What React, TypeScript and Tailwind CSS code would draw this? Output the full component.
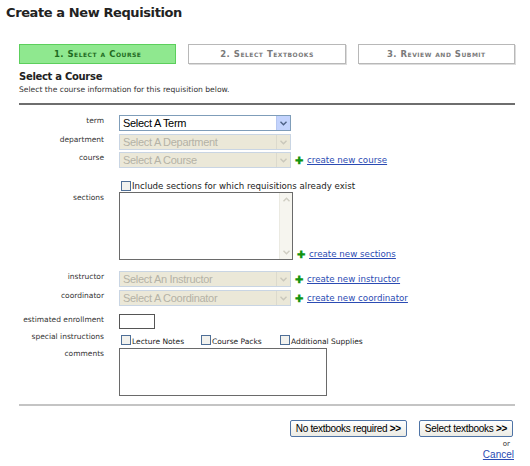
import { ReactNode } from 'react';

const labelFont = { fontFamily: '"DejaVu Sans", Verdana, sans-serif' };

function Chevron({ color = '#4d6185' }: { color?: string }) {
  return (
    <svg width="7" height="5" viewBox="0 0 7 5">
      <path d="M0.5 0.8 L3.5 3.8 L6.5 0.8" fill="none" stroke={color} strokeWidth="1.4" />
    </svg>
  );
}

function FakeSelect({ text, enabled }: { text: string; enabled?: boolean }) {
  return (
    <div
      className={`flex items-center w-[172px] h-[16px] border ${enabled ? 'border-[#7f9db9] bg-white text-black' : 'border-[#c9d5e3] bg-[#ebe8d8] text-[#b4b2a6]'}`}
      style={{ fontFamily: '"Liberation Sans", Arial, sans-serif' }}
    >
      <span className="flex-1 pl-[3px] text-[11px] leading-none tracking-[-0.3px]">{text}</span>
      <span
        className={`flex items-center justify-center w-[14px] h-[14px] border-l ${enabled ? 'bg-[#c3d3fd] border-[#b6c7f0]' : 'bg-[#ebe8d8] border-[#dcdacd]'}`}
      >
        <Chevron color={enabled ? '#4d6185' : '#c9c7bb'} />
      </span>
    </div>
  );
}

function AddLink({ text }: { text: string }) {
  return (
    <span className="flex items-center gap-[4px] ml-[4px] leading-none">
      <span className="text-[#129412] text-[10px] font-bold leading-none">✚</span>
      <a href="#" className="text-[#2b4bb3] underline text-[8.7px] leading-none" style={labelFont}>
        {text}
      </a>
    </span>
  );
}

function Box() {
  return <span className="block w-[10px] h-[10px] border border-[#4f6f97] bg-[#f2f2ee]" />;
}

function Row({ label, children, className = '' }: { label: string; children: ReactNode; className?: string }) {
  return (
    <div className={`flex ${className}`}>
      <div className="w-[85px] text-right text-[7.5px] text-[#333] pt-[1px] leading-[10px]" style={labelFont}>
        {label}
      </div>
      <div className="ml-[15px] flex-1">{children}</div>
    </div>
  );
}

function Tab({ text, active }: { text: string; active?: boolean }) {
  return (
    <div
      className={`flex-1 h-[20px] flex items-center justify-center border text-[8.5px] font-bold tracking-[0.5px] ${active ? 'bg-[#8fe88f] border-[#5ccf5c] text-[#1f6b1f]' : 'bg-white border-[#b8b8b8] text-[#7a7a7a] shadow-[1px_1px_0_#dcdcdc]'}`}
      style={{ ...labelFont, fontVariant: 'small-caps' }}
    >
      {text}
    </div>
  );
}

function XpButton({ text }: { text: string }) {
  return (
    <button
      className="h-[17px] px-[5px] border border-[#4f74a6] rounded-[2px] bg-gradient-to-b from-white to-[#ecebe4] text-[10px] text-black leading-none tracking-[-0.3px]"
      style={{ fontFamily: '"Liberation Sans", Arial, sans-serif' }}
    >
      {text} <b>&gt;&gt;</b>
    </button>
  );
}

export default function App() {
  return (
    <div className="w-[530px] h-[466px] bg-white relative overflow-hidden">
      <h1 className="pl-[6px] pt-[5px] text-[13px] font-bold text-[#222] leading-[16px] tracking-[-0.4px]" style={labelFont}>
        Create a New Requisition
      </h1>

      <div className="ml-[19px] mr-[15px]">
        <div className="flex gap-[12px] mt-[23px]">
          <Tab text="1. Select a Course" active />
          <Tab text="2. Select Textbooks" />
          <Tab text="3. Review and Submit" />
        </div>

        <h2 className="mt-[7px] text-[10px] font-bold text-[#222] leading-[12px] tracking-[-0.3px]" style={labelFont}>
          Select a Course
        </h2>
        <p className="mt-[2px] text-[7.6px] text-[#333] leading-[10px]" style={labelFont}>
          Select the course information for this requisition below.
        </p>
        <div className="mt-[8px] border-t-2 border-[#6e6e6e]" />

        <div className="mt-[10px] flex flex-col">
          <Row label="term">
            <FakeSelect text="Select A Term" enabled />
          </Row>
          <Row label="department" className="mt-[3px]">
            <FakeSelect text="Select A Department" />
          </Row>
          <Row label="course" className="mt-[2px]">
            <div className="flex items-center">
              <FakeSelect text="Select A Course" />
              <AddLink text="create new course" />
            </div>
          </Row>

          <div className="mt-[13px] ml-[102px] flex items-center gap-[1px] leading-none">
            <Box />
            <span className="text-[8.65px] text-[#222] leading-none" style={labelFont}>
              Include sections for which requisitions already exist
            </span>
          </div>

          <Row label="sections" className="mt-[1px]">
            <div className="flex items-end">
              <div className="w-[174px] h-[68px] border border-[#6a6a6a] bg-white flex justify-end">
                <div className="w-[13px] h-full bg-[#f6f5ef] border-l border-[#ebeae2] flex flex-col justify-between items-center py-[1px]">
                  <span className="w-[11px] h-[12px] flex items-center justify-center rotate-180">
                    <Chevron color="#cfcdc2" />
                  </span>
                  <span className="w-[11px] h-[12px] flex items-center justify-center">
                    <Chevron color="#cfcdc2" />
                  </span>
                </div>
              </div>
              <div className="mb-[1px]">
                <AddLink text="create new sections" />
              </div>
            </div>
          </Row>

          <Row label="instructor" className="mt-[11px]">
            <div className="flex items-center">
              <FakeSelect text="Select An Instructor" />
              <AddLink text="create new instructor" />
            </div>
          </Row>
          <Row label="coordinator" className="mt-[3px]">
            <div className="flex items-center">
              <FakeSelect text="Select A Coordinator" />
              <AddLink text="create new coordinator" />
            </div>
          </Row>

          <Row label="estimated enrollment" className="mt-[8px]">
            <div className="w-[36px] h-[15px] border border-[#555] bg-white" />
          </Row>

          <Row label="special instructions" className="mt-[2px]">
            <div className="flex items-end text-[7.5px] text-[#222] leading-none pt-[4px]" style={labelFont}>
              <span className="flex items-end gap-[1px] ml-[2px] w-[80px]">
                <Box />
                Lecture Notes
              </span>
              <span className="flex items-end gap-[1px] w-[79px]">
                <Box />
                Course Packs
              </span>
              <span className="flex items-end gap-[1px]">
                <Box />
                Additional Supplies
              </span>
            </div>
          </Row>

          <Row label="comments" className="mt-[3px]">
            <div className="w-[208px] h-[48px] border border-[#6a6a6a] bg-white" />
          </Row>
        </div>

        <div className="mt-[8px] border-t-2 border-[#c4c4c4]" />

        <div className="mt-[14px] flex justify-end gap-[12px] pr-[2px]">
          <XpButton text="No textbooks required" />
          <XpButton text="Select textbooks" />
        </div>
        <div className="flex flex-col items-end mt-[3px] pr-[1px]">
          <span className="text-[7px] text-[#333] leading-[9px] pr-[4px]" style={labelFont}>or</span>
          <a href="#" className="text-[10px] text-[#2b4bb3] underline leading-[12px]" style={{ fontFamily: '"Liberation Sans", Arial, sans-serif' }}>
            Cancel
          </a>
        </div>
      </div>
    </div>
  );
}
